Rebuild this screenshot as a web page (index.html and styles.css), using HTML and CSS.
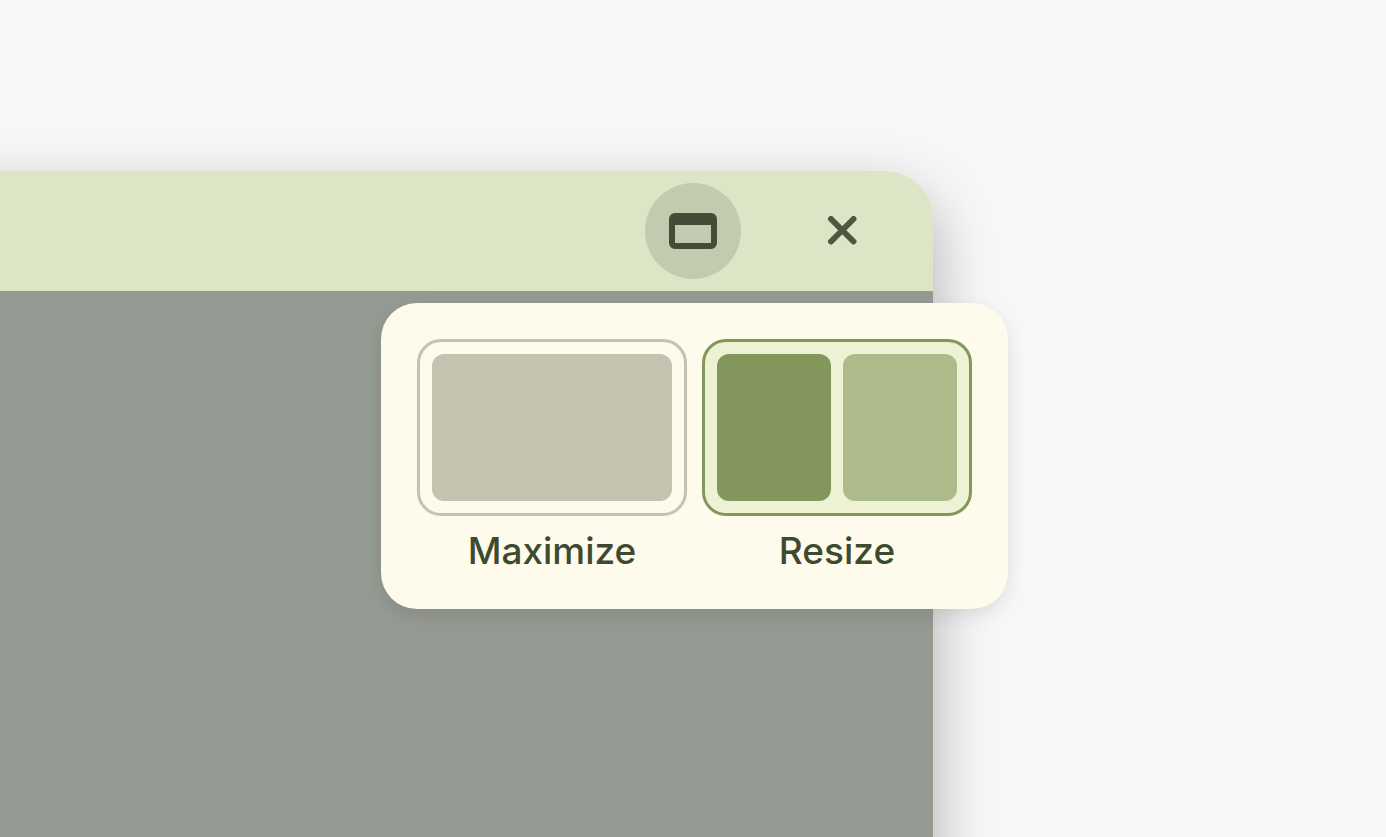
FILE: index.html
```html
<!DOCTYPE html>
<html lang="en">
<head>
  <meta charset="UTF-8">
  <meta name="viewport" content="width=device-width, initial-scale=1">
  <title>Window layout menu</title>
  <link rel="stylesheet" href="styles.css">
</head>
<body>
  <main class="desktop">
    <section class="window">
      <header class="titlebar">
        <button type="button" class="icon-button active" aria-label="Window layout" aria-expanded="true" aria-controls="layoutMenu">
          <svg width="48" height="36" viewBox="0 0 48 36" aria-hidden="true">
            <path fill="currentColor" fill-rule="evenodd" d="M6 0H42A6 6 0 0 1 48 6V30A6 6 0 0 1 42 36H6A6 6 0 0 1 0 30V6A6 6 0 0 1 6 0ZM6 12V30H42V12Z"/>
          </svg>
        </button>
        <button type="button" class="icon-button close" aria-label="Close">
          <svg width="30" height="30" viewBox="0 0 30 30" aria-hidden="true">
            <path fill="none" stroke="currentColor" stroke-width="6" stroke-linecap="round" d="M4 3L26.500 25.500M26.500 3L4 25.500"/>
          </svg>
        </button>
      </header>
      <div class="content"></div>

      <div class="layout-menu" id="layoutMenu">
        <button type="button" class="option" aria-pressed="false">
          <span class="preview">
            <span class="pane"></span>
          </span>
          <span class="label">Maximize</span>
        </button>
        <button type="button" class="option selected" aria-pressed="true">
          <span class="preview">
            <span class="pane"></span>
            <span class="pane light"></span>
          </span>
          <span class="label">Resize</span>
        </button>
      </div>
    </section>
  </main>
</body>
</html>
```
FILE: styles.css
```css
* {
  box-sizing: border-box;
}

body {
  margin: 0;
  font-family: "Google Sans", Inter, sans-serif;
  background: #f7f7f7;
}

button {
  padding: 0;
  border: none;
  background: none;
  font: inherit;
  cursor: pointer;
}

.desktop {
  height: 100vh;
  padding: 171px 453px 0 0;
  overflow: hidden;
}

/* the window runs past the left and bottom of the screen */
.window {
  position: relative;
  display: flex;
  flex-direction: column;
  height: 100vh;
  margin-left: -120px;
  border-top-right-radius: 48px;
  box-shadow: 0 24px 60px rgba(0, 0, 0, 0.3);
}

.titlebar {
  display: flex;
  justify-content: flex-end;
  align-items: center;
  gap: 53px;
  height: 120px;
  padding-right: 43px;
  border-top-right-radius: 48px;
  background: #dce6c7;
}

.content {
  flex: 1;
  background: #959a92;
}

.icon-button {
  display: flex;
  justify-content: center;
  align-items: center;
  width: 96px;
  height: 96px;
  border-radius: 50%;
  color: #444b36;
}

.icon-button.active {
  background: #c2caaf;
}

.icon-button.close {
  color: #4e573f;
}

/* Layout menu */
.layout-menu {
  position: absolute;
  top: 132px;
  right: -75px;
  display: flex;
  gap: 15px;
  padding: 36px;
  border-radius: 36px;
  background: #fffbec;
  box-shadow: 0 6px 18px rgba(0, 0, 0, 0.1);
}

.option {
  display: flex;
  flex-direction: column;
  gap: 12px;
  width: 270px;
  color: #3e4a2d;
}

.preview {
  display: flex;
  gap: 12px;
  width: 100%;
  height: 177px;
  padding: 12px;
  border: 3px solid #c4c3af;
  border-radius: 24px;
}

.pane {
  flex: 1;
  border-radius: 12px;
  background: #c4c3af;
}

.selected .preview {
  border-color: #83965b;
  background: #ecf2d3;
}

.selected .pane {
  background: #83965b;
}

.selected .pane.light {
  background: #adbb8a;
}

.label {
  width: 100%;
  font-size: 37px;
  font-weight: 500;
  line-height: 45px;
  text-align: center;
}
```
